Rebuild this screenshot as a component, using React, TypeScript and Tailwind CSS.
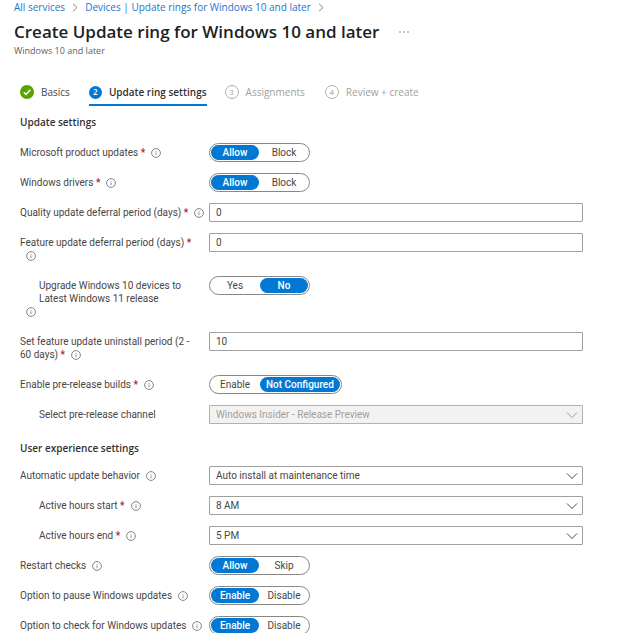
import { useState, type ReactNode } from 'react';

function InfoIcon() {
  return (
    <svg viewBox="0 0 10 10" className="inline-block size-[10px] shrink-0 align-[-2px]" fill="none" stroke="#797775" role="img" aria-label="More information">
      <circle cx="5" cy="5" r="4.4" strokeWidth="0.9" />
      <path d="M5 4.4v2.8M5 2.8v.9" strokeWidth="0.8" />
    </svg>
  );
}

function Chevron({ className }: { className: string }) {
  return (
    <svg viewBox="0 0 12 12" className={className} fill="none" stroke="currentColor" strokeWidth="1" aria-hidden="true">
      <path d="M1 3.5 6 8.5 11 3.5" />
    </svg>
  );
}

function Crumb() {
  return (
    <svg viewBox="0 0 6 9" className="h-[9px] w-[6px]" fill="none" stroke="#8a8886" strokeWidth="1" aria-hidden="true">
      <path d="M1 .8 5 4.5 1 8.2" />
    </svg>
  );
}

type RowProps = {
  id: string;
  label: string;
  required?: boolean;
  info?: boolean;
  indent?: boolean;
  children: ReactNode;
};

function Row({ id, label, required, info = true, indent, children }: RowProps) {
  return (
    <div className="grid grid-cols-[189px_minmax(0,1fr)] items-start">
      <div className="w-[186px] py-[3px] leading-[13px]">
        <label
          id={id + '-label'}
          htmlFor={id}
          className={indent ? 'inline-block max-w-[176px] pl-[19px] align-top' : ''}
        >
          {label}
          {required && <span className="font-semibold text-[#a4262c]"> *</span>}
        </label>
        {info && (
          <span className="inline-block h-[13px] pl-[6px] align-top">
            <InfoIcon />
          </span>
        )}
      </div>
      {children}
    </div>
  );
}

function Toggle({ id, options, initial }: { id: string; options: string[]; initial: number }) {
  const [active, setActive] = useState(initial);
  return (
    <div
      id={id}
      role="group"
      aria-labelledby={id + '-label'}
      className="flex h-[19px] gap-px justify-self-start rounded-full border border-[#8a8886] p-px"
    >
      {options.map((option, i) => (
        <button
          key={option}
          type="button"
          aria-pressed={i === active}
          onClick={() => setActive(i)}
          className={
            i === active
              ? 'min-w-[48px] rounded-full bg-[#0078d4] px-[6px] leading-[15px] font-medium text-white'
              : 'min-w-[48px] rounded-full px-[6px] leading-[15px]'
          }
        >
          {option}
        </button>
      ))}
    </div>
  );
}

function TextBox({ id, value }: { id: string; value: string }) {
  return (
    <input
      id={id}
      type="text"
      defaultValue={value}
      className="h-[19px] w-full rounded-[1px] border border-[#a19f9d] bg-white px-[6px]"
    />
  );
}

function Dropdown({ id, value, disabled }: { id: string; value: string; disabled?: boolean }) {
  return (
    <div className="relative">
      <select
        id={id}
        disabled={disabled}
        className="block h-[19px] w-full appearance-none rounded-[1px] border border-[#a19f9d] bg-white px-[6px] disabled:border-[#b3b0ad] disabled:bg-[#f3f2f1] disabled:text-[#a19f9d] disabled:opacity-100"
      >
        <option>{value}</option>
      </select>
      <Chevron
        className={
          disabled
            ? 'pointer-events-none absolute top-1 right-[5px] size-3 text-[#a19f9d]'
            : 'pointer-events-none absolute top-1 right-[5px] size-3 text-[#484644]'
        }
      />
    </div>
  );
}

function PendingStep({ n, label }: { n: number; label: string }) {
  return (
    <button type="button" className="flex items-center gap-[7px] text-[#a19f9d]">
      <span className="flex size-[14px] items-center justify-center rounded-full border border-[#b3b0ad] text-[8px] leading-none">{n}</span>
      <span>{label}</span>
    </button>
  );
}

export default function App() {
  return (
    <main className="bg-white pr-[41px] font-['Roboto','Noto_Sans',sans-serif] text-[10px] text-[#484644]">
      <header className="pl-[14px] font-['Open_Sans','Noto_Sans',sans-serif]">
        <nav aria-label="Breadcrumb" className="flex h-[15px] items-center gap-[7px] leading-[15px] whitespace-nowrap text-[#1b76d0]">
          <a href="#services">All services</a>
          <Crumb />
          <a href="#devices">Devices | Update rings for Windows 10 and later</a>
          <Crumb />
        </nav>
        <div className="mt-[5px] flex items-center gap-5">
          <h1 className="text-[17px] leading-6 font-semibold whitespace-nowrap text-[#201f1e]">
            Create Update ring for Windows 10 and later
          </h1>
          <button type="button" aria-label="More actions" className="text-[#605e5c]">
            <svg viewBox="0 0 10 4" className="h-1 w-[10px]" fill="currentColor" aria-hidden="true">
              <circle cx="1" cy="2" r=".7" />
              <circle cx="5" cy="2" r=".7" />
              <circle cx="9" cy="2" r=".7" />
            </svg>
          </button>
        </div>
        <p className="text-[9px] leading-[13px] text-[#605e5c]">Windows 10 and later</p>
      </header>

      <div className="pl-5">
        <nav aria-label="Steps" className="mt-[27px] flex items-start font-['Open_Sans','Noto_Sans',sans-serif] leading-4 whitespace-nowrap">
          <button type="button" className="mr-[19px] flex items-center gap-[7px]">
            <svg viewBox="0 0 14 14" className="size-[14px]" aria-hidden="true">
              <circle cx="7" cy="7" r="7" fill="#57a300" />
              <path d="M3.8 7.2 6 9.4 10.3 4.8" fill="none" stroke="#fff" strokeWidth="1.5" />
            </svg>
            <span>Basics</span>
          </button>
          <button type="button" aria-current="step" className="mr-[18px] flex items-center gap-[7px] border-b-2 border-[#0078d4] pb-1 font-semibold text-[#323130]">
            <span className="flex size-[13px] items-center justify-center rounded-full bg-[#0078d4] text-[8px] leading-none text-white">2</span>
            <span>Update ring settings</span>
          </button>
          <div className="flex gap-5">
            <PendingStep n={3} label="Assignments" />
            <PendingStep n={4} label="Review + create" />
          </div>
        </nav>

        <h2 className="mt-[9px] font-['Open_Sans','Noto_Sans',sans-serif] leading-[15px] font-semibold text-[#323130]">Update settings</h2>
        <div className="mt-[13px] flex flex-col gap-[11px]">
          <Row id="products" label="Microsoft product updates" required>
            <Toggle id="products" options={['Allow', 'Block']} initial={0} />
          </Row>
          <Row id="drivers" label="Windows drivers" required>
            <Toggle id="drivers" options={['Allow', 'Block']} initial={0} />
          </Row>
          <Row id="quality" label="Quality update deferral period (days)" required>
            <TextBox id="quality" value="0" />
          </Row>
          <Row id="feature" label="Feature update deferral period (days)" required>
            <TextBox id="feature" value="0" />
          </Row>
          <Row id="upgrade" label="Upgrade Windows 10 devices to Latest Windows 11 release" indent>
            <Toggle id="upgrade" options={['Yes', 'No']} initial={1} />
          </Row>
          <Row id="uninstall" label={'Set feature update uninstall period (2 - 60\u00a0days)'} required>
            <TextBox id="uninstall" value="10" />
          </Row>
          <Row id="prerelease" label="Enable pre-release builds" required>
            <Toggle id="prerelease" options={['Enable', 'Not Configured']} initial={1} />
          </Row>
          <Row id="channel" label="Select pre-release channel" indent info={false}>
            <Dropdown id="channel" value="Windows Insider - Release Preview" disabled />
          </Row>
        </div>

        <h2 className="mt-[17px] font-['Open_Sans','Noto_Sans',sans-serif] leading-[15px] font-semibold text-[#323130]">User experience settings</h2>
        <div className="mt-[10px] flex flex-col gap-[11px]">
          <Row id="behavior" label="Automatic update behavior">
            <Dropdown id="behavior" value="Auto install at maintenance time" />
          </Row>
          <Row id="start" label="Active hours start" required indent>
            <Dropdown id="start" value="8 AM" />
          </Row>
          <Row id="end" label="Active hours end" required indent>
            <Dropdown id="end" value="5 PM" />
          </Row>
          <Row id="restart" label="Restart checks">
            <Toggle id="restart" options={['Allow', 'Skip']} initial={0} />
          </Row>
          <Row id="pause" label="Option to pause Windows updates">
            <Toggle id="pause" options={['Enable', 'Disable']} initial={0} />
          </Row>
          <Row id="check" label="Option to check for Windows updates">
            <Toggle id="check" options={['Enable', 'Disable']} initial={0} />
          </Row>
        </div>
      </div>
    </main>
  );
}
